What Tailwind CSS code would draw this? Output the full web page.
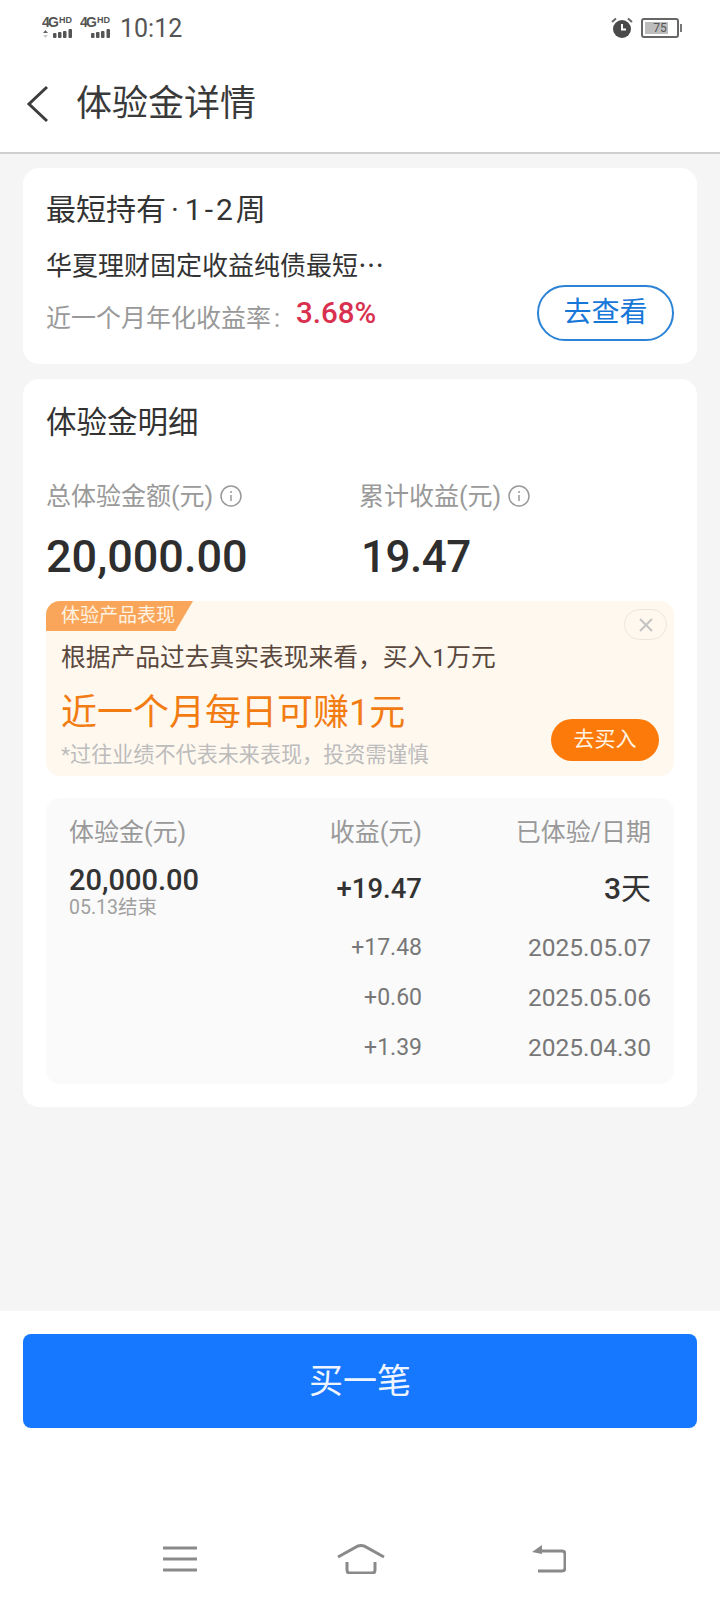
<!DOCTYPE html>
<html lang="zh-CN">
  <head>
    <meta charset="UTF-8" />
    <meta name="viewport" content="width=device-width, initial-scale=1.0" />
    <title>体验金详情</title>
    <script src="https://cdn.jsdelivr.net/npm/@tailwindcss/browser@4"></script>
  </head>
  <body class="m-0 p-0 bg-white font-['Roboto','Noto_Sans_CJK_SC',sans-serif]">
    <div class="w-[720px] h-[1600px] flex flex-col overflow-hidden">
      <!-- Status bar -->
      <div class="h-[56px] flex items-center justify-between pl-[42px] pr-[38px] shrink-0">
        <div class="flex items-center gap-[6px]">
          <svg width="32" height="32" viewBox="0 0 32 32" fill="#555">
            <text x="0" y="15" font-size="14" font-weight="700" font-family="Liberation Sans" textLength="17">4G</text>
            <text x="17" y="11" font-size="9" font-weight="700" font-family="Liberation Sans" textLength="13">HD</text>
            <path d="M1 21 3.500 18 6 21Z" fill="#666" />
            <path d="M1 23 3.500 26 6 23Z" fill="#ccc" />
            <rect x="11" y="21" width="3.500" height="5" rx="1" /><rect x="16" y="20" width="3.500" height="6" rx="1" /><rect x="21" y="19" width="3.500" height="7" rx="1" /><rect x="26.500" y="17" width="3.500" height="9" rx="1" />
          </svg>
          <svg width="32" height="32" viewBox="0 0 32 32" fill="#555">
            <text x="0" y="15" font-size="14" font-weight="700" font-family="Liberation Sans" textLength="17">4G</text>
            <text x="17" y="11" font-size="9" font-weight="700" font-family="Liberation Sans" textLength="13">HD</text>
            <rect x="11" y="21" width="3.500" height="5" rx="1" /><rect x="16" y="20" width="3.500" height="6" rx="1" /><rect x="21" y="19" width="3.500" height="7" rx="1" /><rect x="26.500" y="17" width="3.500" height="9" rx="1" />
          </svg>
          <span class="ml-[2px] text-[25px] leading-none text-[#555]">10:12</span>
        </div>
        <div class="flex items-center gap-[8px]">
          <svg width="22" height="22" viewBox="0 0 22 22">
            <circle cx="11" cy="12" r="9" fill="#4a4a4a" />
            <path d="M11 7v5.500h4" fill="none" stroke="#fff" stroke-width="2" />
            <path d="M1 5 5 1.500M21 5 17 1.500" stroke="#666" stroke-width="2" />
          </svg>
          <div class="flex items-center">
            <div class="w-[38px] h-[20px] rounded-[3px] border-2 border-[#666] p-[2px] relative">
              <div class="h-full w-[75%] bg-[#bdbdbd]"></div>
              <span class="absolute inset-0 flex items-center justify-center text-[12px] leading-none text-[#555]">75</span>
            </div>
            <div class="w-[2px] h-[8px] bg-[#777] ml-[1px]"></div>
          </div>
        </div>
      </div>

      <!-- Header -->
      <div class="h-[98px] shrink-0 flex items-center border-b-2 border-[#cfcfcf]">
        <svg class="ml-[26px]" width="24" height="38" viewBox="0 0 24 38" fill="none" stroke="#3c3c3c" stroke-width="3">
          <path d="M21 2 3 19 21 36" />
        </svg>
        <h1 class="ml-[26px] text-[36px] leading-none font-normal text-[#3a3a3a]">体验金详情</h1>
      </div>

      <!-- Content -->
      <div class="flex-1 bg-[#f5f5f5] px-[23px] pt-[14px] flex flex-col gap-[15px]">
        <div class="h-[196px] bg-white rounded-[16px] px-[23px] pt-[22px] flex flex-col">
          <div class="text-[30px] leading-[40px] text-[#333]">最短持有<span class="ml-[5px]">·</span><span class="ml-[6px] tracking-[3px]">1-2</span>周</div>
          <div class="mt-[18px] text-[26px] leading-[36px] text-[#333]">华夏理财固定收益纯债最短⋯</div>
          <div class="flex items-center justify-between -mt-[4px]">
            <div class="flex items-center mt-[4px]">
              <span class="text-[25px] leading-[36px] text-[#999] mt-[12px]">近一个月年化收益率<span class="ml-[3px]">:</span></span>
              <span class="ml-[16px] text-[29.5px] leading-[36px] font-medium text-[#d9304f]">3.68%</span>
            </div>
            <div class="w-[137px] h-[56px] mt-[5px] rounded-full border-2 border-[#2b83d6] flex items-center justify-center text-[28px] text-[#1677d8]">去查看</div>
          </div>
        </div>

        <div class="h-[728px] bg-white rounded-[16px] px-[23px] pt-[23px] flex flex-col">
          <div class="text-[30.5px] leading-[42px] text-[#333]">体验金明细</div>
          <div class="grid grid-cols-[313px_1fr] mt-[33px]">
            <div class="flex items-center gap-[6px] text-[25px] leading-[40px] text-[#999]">
              总体验金额(元)
              <svg width="24" height="24" viewBox="0 0 24 24" fill="none" stroke="#999" stroke-width="1.500"><circle cx="12" cy="11" r="10" /><path d="M12 10v6M12 6v2" /></svg>
            </div>
            <div class="flex items-center gap-[6px] text-[25px] leading-[40px] text-[#999]">
              累计收益(元)
              <svg width="24" height="24" viewBox="0 0 24 24" fill="none" stroke="#999" stroke-width="1.500"><circle cx="12" cy="11" r="10" /><path d="M12 10v6M12 6v2" /></svg>
            </div>
            <div class="mt-[14px] text-[45px] leading-[52px] font-medium text-[#2e2e2e]">20,000.00</div>
            <div class="mt-[14px] ml-[2px] text-[44px] leading-[52px] font-medium text-[#2e2e2e] tracking-[-0.5px]">19.47</div>
          </div>

          <!-- Promo -->
          <div class="relative mt-[18px] h-[175px] bg-[#fef8ef] rounded-[14px] pl-[15px] pt-[39px]">
            <div class="absolute left-0 top-0 w-[147px] h-[30px] bg-[#f9a65a] rounded-tl-[14px] text-[19px] leading-[30px] text-[#fff3e3] pl-[15px] [clip-path:polygon(0_0,100%_0,88%_100%,0_100%)]">体验产品表现</div>
            <div class="absolute right-[7px] top-[8px] w-[43px] h-[31px] rounded-full border border-[#eee6da] flex items-center justify-center">
              <svg width="16" height="16" viewBox="0 0 16 16" stroke="#c4c4c4" stroke-width="2"><path d="M2 2 14 14M14 2 2 14" /></svg>
            </div>
            <div class="text-[24.75px] leading-[36px] text-[#5a483e]">根据产品过去真实表现来看，买入1万元</div>
            <div class="mt-[16px] text-[36px] leading-[42px] text-[#f27c12]">近一个月每日可赚1元</div>
            <div class="mt-[7px] text-[21.1px] leading-[28px] text-[#bcbcbc]">*过往业绩不代表未来表现，投资需谨慎</div>
            <div class="absolute right-[15px] bottom-[15px] w-[108px] h-[42px] rounded-full bg-[#fb7a0a] flex items-center justify-center text-[21px] text-[#fff3e3]">去买入</div>
          </div>

          <!-- Table -->
          <div class="mt-[22px] h-[286px] bg-[#fafafa] rounded-[14px] px-[23px] pt-[16px]">
            <div class="grid grid-cols-[190px_163px_1fr] text-[25px] leading-[38px] text-[#999]">
              <div>体验金(元)</div>
              <div class="text-right">收益(元)</div>
              <div class="text-right">已体验/日期</div>
            </div>
            <div class="grid grid-cols-[190px_163px_1fr] mt-[6px]">
              <div class="pt-[4px]">
                <div class="text-[29px] leading-[36px] font-medium text-[#333]">20,000.00</div>
                <div class="text-[19.5px] leading-[20px] text-[#a0a0a0]">05.13结束</div>
              </div>
              <div class="text-right text-[27.5px] leading-[54px] pt-[4px] font-medium text-[#333]">+19.47</div>
              <div class="text-right text-[30px] leading-[54px] pt-[4px] text-[#333]"><span class="font-medium">3</span>天</div>
            </div>
            <div class="grid grid-cols-[190px_163px_1fr] mt-[5px] leading-[50px] text-[#777]">
              <div></div>
              <div class="text-right text-[23px]">+17.48</div>
              <div class="text-right text-[24.5px]">2025.05.07</div>
            </div>
            <div class="grid grid-cols-[190px_163px_1fr] leading-[50px] text-[#777]">
              <div></div>
              <div class="text-right text-[23px]">+0.60</div>
              <div class="text-right text-[24.5px]">2025.05.06</div>
            </div>
            <div class="grid grid-cols-[190px_163px_1fr] leading-[50px] text-[#777]">
              <div></div>
              <div class="text-right text-[23px]">+1.39</div>
              <div class="text-right text-[24.5px]">2025.04.30</div>
            </div>
          </div>
        </div>
      </div>

      <!-- Footer -->
      <div class="h-[289px] shrink-0 bg-white px-[23px] pt-[23px] flex flex-col">
        <div class="h-[94px] rounded-[8px] bg-[#1677ff] flex items-center justify-center text-[34px] text-[#eef5ff]">买一笔</div>
        <div class="mt-[111px] h-[40px] flex items-center pl-[140px]">
          <svg width="34" height="26" viewBox="0 0 34 26" fill="none" stroke="#8a8a8a" stroke-width="3"><path d="M0 2H34M0 13H34M0 24H34" /></svg>
          <svg class="ml-[140px]" width="48" height="30" viewBox="0 0 48 30" fill="none" stroke="#8a8a8a" stroke-width="3"><path d="M1 13 21 2Q24 1 27 2L47 13M10 18V26Q10 29 13 29H35Q38 29 38 26V18" /></svg>
          <svg class="ml-[147px]" width="34" height="28" viewBox="0 0 34 28" fill="none" stroke="#8a8a8a" stroke-width="3"><path d="M8 6H30Q33 6 33 9V23Q33 26 30 26H6" /><path d="M0 7 10 0V9Z" fill="#8a8a8a" stroke="none" /></svg>
        </div>
      </div>
    </div>
  </body>
</html>
